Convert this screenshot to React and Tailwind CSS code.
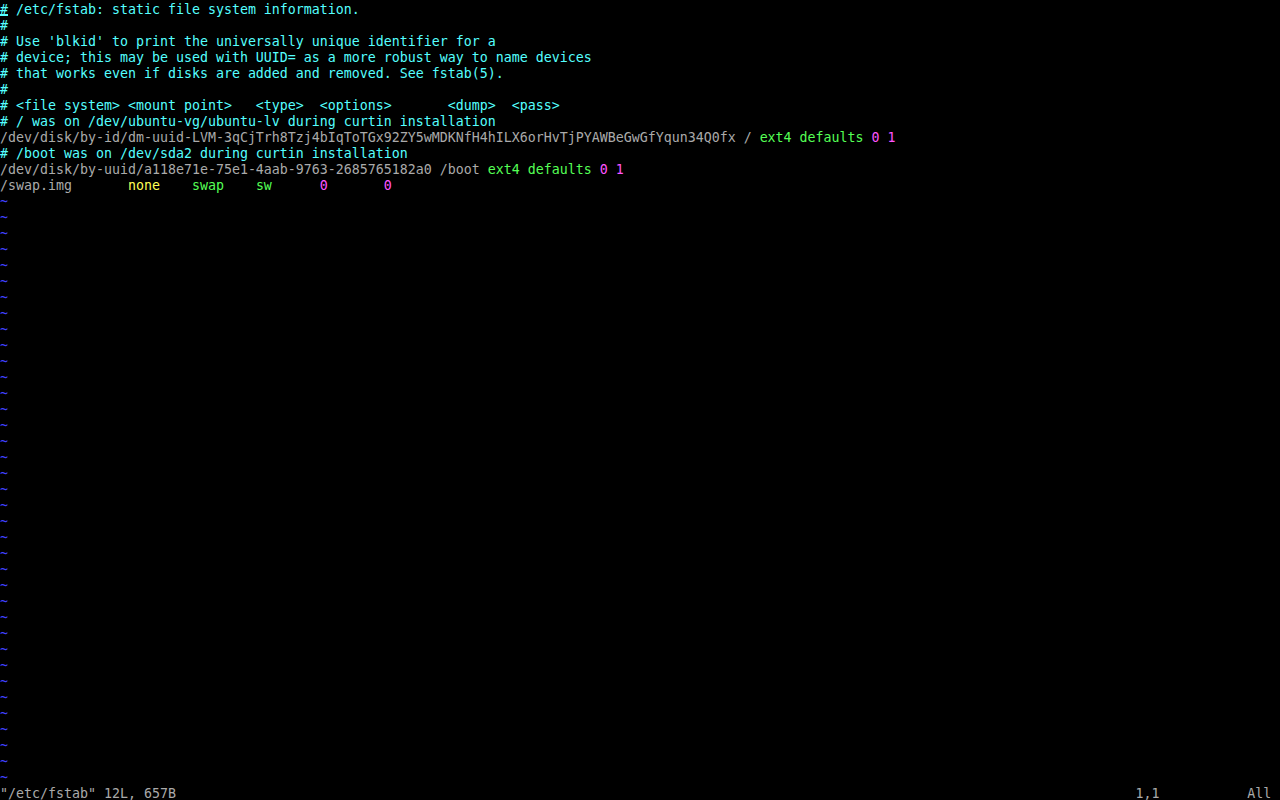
import React from 'react';

// vim in a linux console: 160x50 cells of 8x16px
const C = {
  text: 'text-[#aaaaaa]',
  comment: 'text-[#55ffff]',
  type: 'text-[#55ff55]',
  stmt: 'text-[#ffff55]',
  num: 'text-[#ff55ff]',
  tilde: 'text-[#4040ff]',
};

const lines = [
  [['comment', '# /etc/fstab: static file system information.']],
  [['comment', '#']],
  [['comment', "# Use 'blkid' to print the universally unique identifier for a"]],
  [['comment', '# device; this may be used with UUID= as a more robust way to name devices']],
  [['comment', '# that works even if disks are added and removed. See fstab(5).']],
  [['comment', '#']],
  [['comment', '# <file system> <mount point>   <type>  <options>       <dump>  <pass>']],
  [['comment', '# / was on /dev/ubuntu-vg/ubuntu-lv during curtin installation']],
  [
    ['text', '/dev/disk/by-id/dm-uuid-LVM-3qCjTrh8Tzj4bIqToTGx92ZY5wMDKNfH4hILX6orHvTjPYAWBeGwGfYqun34Q0fx / '],
    ['type', 'ext4 defaults'],
    ['text', ' '],
    ['num', '0 1'],
  ],
  [['comment', '# /boot was on /dev/sda2 during curtin installation']],
  [
    ['text', '/dev/disk/by-uuid/a118e71e-75e1-4aab-9763-2685765182a0 /boot '],
    ['type', 'ext4 defaults'],
    ['text', ' '],
    ['num', '0 1'],
  ],
  [
    ['text', '/swap.img       '],
    ['stmt', 'none'],
    ['text', '    '],
    ['type', 'swap'],
    ['text', '    '],
    ['type', 'sw'],
    ['text', '      '],
    ['num', '0'],
    ['text', '       '],
    ['num', '0'],
  ],
];

const Line = ({ segs, cursor }) => (
  <div className="relative h-4 leading-[20px] whitespace-pre">
    {segs.map(([kind, str], i) => (
      <span key={i} className={C[kind]}>
        {str}
      </span>
    ))}
    {cursor && <span className="absolute left-0 top-[14px] w-2 h-[2px] bg-[#55ffff]" />}
  </div>
);

export default function App() {
  const tildes = Array.from({ length: 37 });
  const status = '"/etc/fstab" 12L, 657B'.padEnd(142, ' ') + '1,1'.padEnd(14, ' ') + 'All';

  return (
    <div className="w-[1280px] h-[800px] bg-black overflow-hidden font-['DejaVu_Sans_Mono',monospace] text-[13.29px] text-[#aaaaaa]">
      {lines.map((segs, i) => (
        <Line key={i} segs={segs} cursor={i === 0} />
      ))}
      {tildes.map((_, i) => (
        <div key={i} className={`h-4 leading-[20px] ${C.tilde}`}>~</div>
      ))}
      <div className="h-4 leading-[20px] whitespace-pre">{status}</div>
    </div>
  );
}
